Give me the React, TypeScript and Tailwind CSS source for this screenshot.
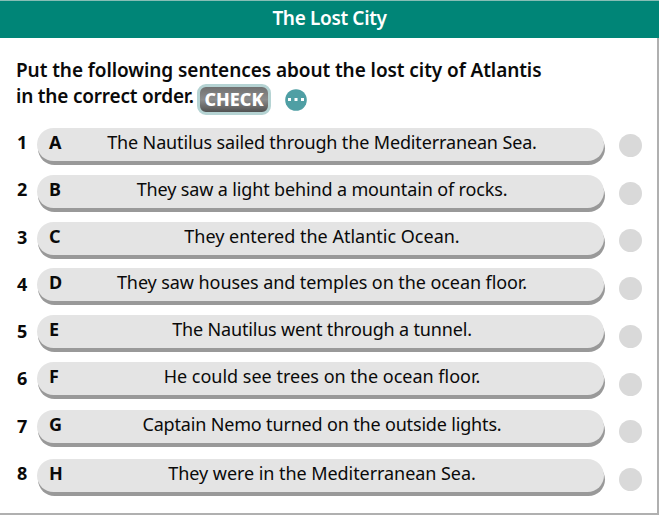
import React from "react";

const sentences = [
  { letter: "A", text: "The Nautilus sailed through the Mediterranean Sea.", row: "h-[47px]", fit: "tracking-[-0.14px]" },
  { letter: "B", text: "They saw a light behind a mountain of rocks.", row: "h-[47px]", fit: "tracking-[-0.14px]" },
  { letter: "C", text: "They entered the Atlantic Ocean.", row: "h-[46px]", fit: "tracking-normal" },
  { letter: "D", text: "They saw houses and temples on the ocean floor.", row: "h-[47px]", fit: "tracking-[-0.08px]" },
  { letter: "E", text: "The Nautilus went through a tunnel.", row: "h-[47px]", fit: "tracking-[-0.17px]" },
  { letter: "F", text: "He could see trees on the ocean floor.", row: "h-[48px]", fit: "tracking-normal" },
  { letter: "G", text: "Captain Nemo turned on the outside lights.", row: "h-[49px]", fit: "tracking-[-0.17px]" },
  { letter: "H", text: "They were in the Mediterranean Sea.", row: "h-[37px]", fit: "tracking-[-0.06px]" },
];

const App = () => {
  return (
    <div className="flex h-[515px] w-[661px] bg-white font-['Noto_Sans',sans-serif] text-[#0a0a0a]">
      <div className="flex w-[659px] flex-col border-r-2 border-b-2 border-[#b0b0b0]">
        <div className="-mr-0.5 h-[38px] border-t border-[#86bdb5] bg-[#008577] pt-1 text-center text-[19px] leading-[26px] font-semibold tracking-[-0.35px] text-white">
          The Lost City
        </div>
        <div className="h-[90px] pt-[19px] pl-4 text-[19px] leading-[26px] font-semibold">
          <p className="tracking-[-0.07px] whitespace-nowrap">
            Put the following sentences about the lost city of Atlantis
          </p>
          <div className="flex items-start">
            <p className="w-[181px] tracking-[-0.2px] whitespace-nowrap">in the correct order.</p>
            <button className="mt-px h-[31px] w-[74px] rounded-[9px] border-[3px] border-[#b5d3d3] bg-linear-to-b from-[#6a6a6a] via-[#8c8c8c] to-[#444] bg-origin-border text-[18px] leading-[25px] font-extrabold text-white">
              CHECK
            </button>
            <svg className="mt-[6px] ml-[14px]" width="22" height="22" viewBox="0 0 22 22">
              <circle cx="11" cy="11" r="10.8" fill="#4f9fa4" />
              <path d="M3 9h3v3h-3zM9.5 9h3v3h-3zM16 9h3v3h-3z" fill="#fff" />
            </svg>
          </div>
        </div>
        <div className="flex items-start pl-[17px]">
          {/* order numbers */}
          <div className="flex h-[357px] w-5 flex-col justify-between pt-[2px] text-[18px] leading-6 font-bold">
            {sentences.map((item, i) => (
              <span key={item.letter}>{i + 1}</span>
            ))}
          </div>
          {/* sentences */}
          <div className="w-[567px]">
            {sentences.map((item) => (
              <div key={item.letter} className={item.row}>
                <div className="flex h-[33px] rounded-[17px] bg-[#e4e4e4] pt-[2px] pl-3 text-[18px] leading-6 shadow-[1px_4px_0_#999]">
                  <span className="w-4 font-bold">{item.letter}</span>
                  <p className={`flex-1 pr-[25px] text-center whitespace-nowrap ${item.fit}`}>
                    {item.text}
                  </p>
                </div>
              </div>
            ))}
          </div>
          {/* result dots */}
          <div className="ml-[15px] flex h-[363px] flex-col justify-between pt-[6px]">
            {sentences.map((item) => (
              <div key={item.letter} className="size-[23px] rounded-full bg-[#d9d9d9]" />
            ))}
          </div>
        </div>
      </div>
    </div>
  );
};

export default App;
